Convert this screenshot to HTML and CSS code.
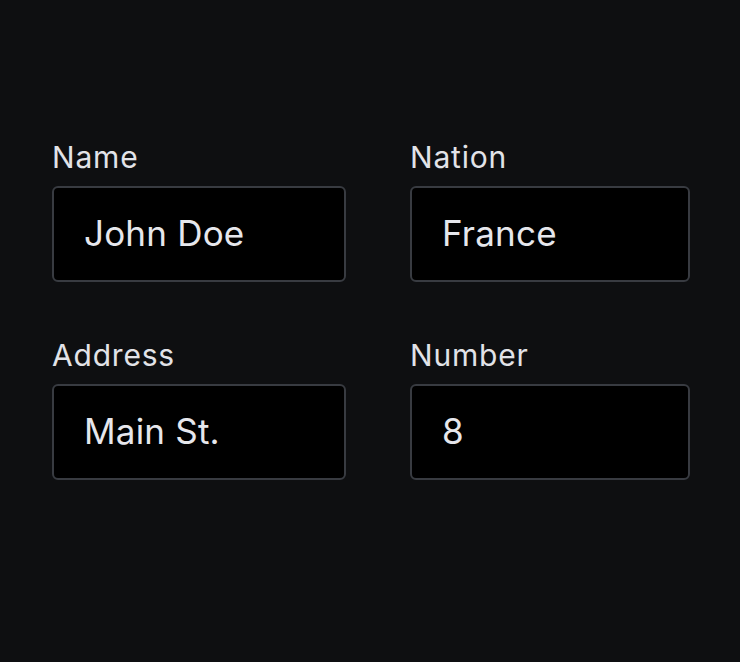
FILE: index.html
```html
<!DOCTYPE html>
<html>
<head>
<meta charset="utf-8">
<link rel="stylesheet" href="styles.css">
</head>
<body>
<div class="form">
  <div class="field">
    <div class="label">Name</div>
    <div class="input">John Doe</div>
  </div>
  <div class="field">
    <div class="label">Nation</div>
    <div class="input">France</div>
  </div>
  <div class="field">
    <div class="label">Address</div>
    <div class="input">Main St.</div>
  </div>
  <div class="field">
    <div class="label">Number</div>
    <div class="input">8</div>
  </div>
</div>
</body>
</html>
```
FILE: styles.css
```css
html, body {
  margin: 0;
  padding: 0;
  background: #0e0f11;
  width: 740px;
  height: 662px;
  overflow: hidden;
  font-family: Inter, "Noto Sans", sans-serif;
}
.form {
  display: grid;
  grid-template-columns: 294px 280px;
  column-gap: 64px;
  row-gap: 56px;
  padding: 140px 0 0 52px;
}
.field {
  display: flex;
  flex-direction: column;
  gap: 12px;
}
.label {
  color: #e2e3e8;
  font-size: 30px;
  line-height: 34px;
  letter-spacing: 0.8px;
}
.input {
  box-sizing: border-box;
  height: 96px;
  border: 2px solid #383b41;
  border-radius: 6px;
  background: #000;
  color: #e6e7ec;
  font-size: 35px;
  letter-spacing: 0.2px;
  display: flex;
  align-items: center;
  padding: 0 0 2px 30px;
}
```
